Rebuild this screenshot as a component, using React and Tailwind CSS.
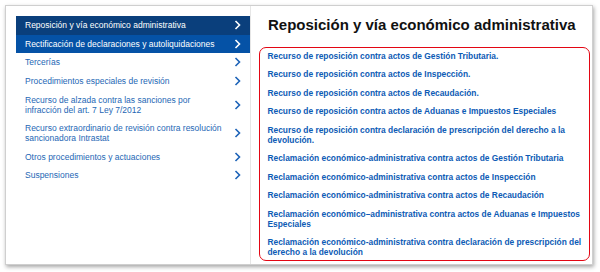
const menu = [
  { label: "Reposición y vía económico administrativa", tone: "dark" },
  { label: "Rectificación de declaraciones y autoliquidaciones", tone: "active" },
  { label: "Tercerías" },
  { label: "Procedimientos especiales de revisión" },
  { label: "Recurso de alzada contra las sanciones por infracción del art. 7 Ley 7/2012" },
  { label: "Recurso extraordinario de revisión contra resolución sancionadora Intrastat" },
  { label: "Otros procedimientos y actuaciones" },
  { label: "Suspensiones" },
];

const links = [
  "Recurso de reposición contra actos de Gestión Tributaria.",
  "Recurso de reposición contra actos de Inspección.",
  "Recurso de reposición contra actos de Recaudación.",
  "Recurso de reposición contra actos de Aduanas e Impuestos Especiales",
  "Recurso de reposición contra declaración de prescripción del derecho a la devolución.",
  "Reclamación económico-administrativa contra actos de Gestión Tributaria",
  "Reclamación económico-administrativa contra actos de Inspección",
  "Reclamación económico-administrativa contra actos de Recaudación",
  "Reclamación económico–administrativa contra actos de Aduanas e Impuestos Especiales",
  "Reclamación económico-administrativa contra declaración de prescripción del derecho a la devolución",
];

function Chevron({ light }) {
  return (
    <svg width="7" height="10" viewBox="0 0 7 10" className="shrink-0">
      <path
        d="M1.5 1 L5.5 5 L1.5 9"
        fill="none"
        stroke={light ? "#ffffff" : "#1d63b8"}
        strokeWidth="1.6"
      />
    </svg>
  );
}

function MenuItem({ label, tone }) {
  const bg =
    tone === "dark" ? "bg-[#0a3f7c] text-white" : tone === "active" ? "bg-[#0552a6] text-white" : "text-[#2467b5]";
  return (
    <div className={`flex items-center pl-[9px] pr-[9px] py-[4.3px] ${bg}`}>
      <span className="w-[200px] leading-[10px]">{label}</span>
      <span className="ml-auto">
        <Chevron light={!!tone} />
      </span>
    </div>
  );
}

export default function App() {
  return (
    <div
      className="w-[600px] h-[272px] bg-white pl-[5px] pt-[5px]"
      style={{ fontFamily: '"Liberation Sans", Arial, sans-serif' }}
    >
      <div className="flex w-[588px] h-[260px] bg-white border border-[#cfcfcf] shadow-[1px_2px_4px_rgba(0,0,0,0.35)]">
        {/* menú lateral */}
        <div className="w-[245px] pl-[10px] pt-[10px] border-r border-[#e6e6e6] text-[8.5px]">
          {menu.map((m) => (
            <MenuItem key={m.label} {...m} />
          ))}
        </div>

        {/* contenido */}
        <div className="flex-1 pl-[8px] pr-[2px]">
          <h1 className="pl-[9px] pt-[10px] text-[15px] leading-[18px] font-bold text-[#111]">
            Reposición y vía económico administrativa
          </h1>
          <div className="mt-[13px] h-[214px] border-[1.5px] border-[#e30613] rounded-[7px] pl-[7.5px] pr-[2px] pt-[3.7px]">
            <ul className="flex flex-col gap-[9px]">
              {links.map((l) => (
                <li key={l} className="text-[8.4px] leading-[9.6px] font-bold text-[#0d5bb5]">
                  {l}
                </li>
              ))}
            </ul>
          </div>
        </div>
      </div>
    </div>
  );
}
